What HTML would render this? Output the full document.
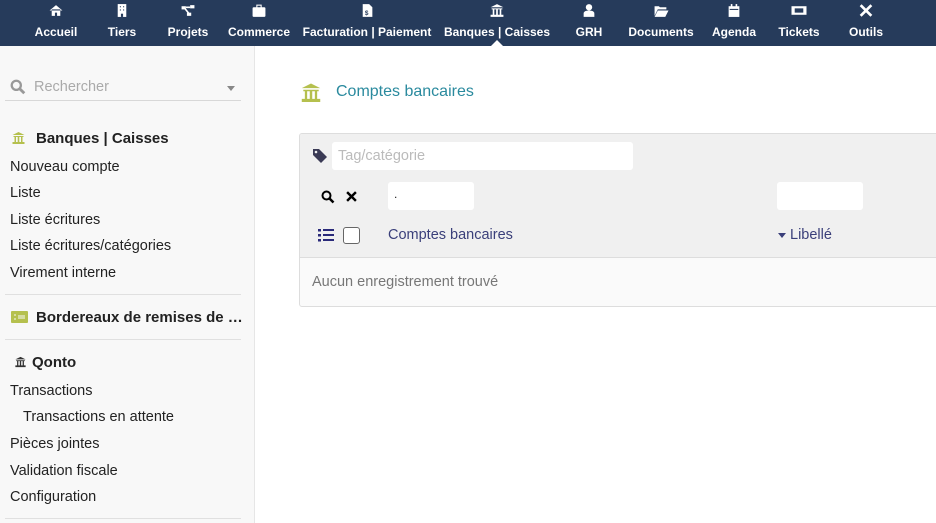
<!DOCTYPE html>
<html><head><meta charset="utf-8"><style>
*{margin:0;padding:0;box-sizing:border-box}
body{width:936px;height:523px;overflow:hidden;font-family:"Liberation Sans",Arial,sans-serif;background:#fff;position:relative}
#nav{position:absolute;left:0;top:0;width:936px;height:46px;background:#263b5b}
.ni{position:absolute;top:0;height:46px;color:#fff;font-size:12px;font-weight:bold;text-align:center;transform:translateX(-50%);white-space:nowrap}
.ni .ic{position:absolute;top:3px;left:50%;transform:translateX(-50%);width:15px;height:15px}
.ni span{position:absolute;top:25px;left:50%;transform:translateX(-50%)}
#side{position:absolute;left:0;top:46px;width:255px;height:477px;background:#f8f8f8;border-right:1px solid #e6e6e6}
.t{position:absolute;font-size:14.5px;color:#222;white-space:nowrap}
.b{font-weight:bold;font-size:15px}
.hr{position:absolute;left:5px;width:236px;height:1px;background:#e0e0e0}
</style></head><body>
<div id="nav">
<div class="ni" style="left:56px"><svg class="ic" viewBox="0 0 14 14"><path d="M1 7L7 2l6 5M3 6v6h3V9h2v3h3V6" fill="#fff"/></svg><span>Accueil</span></div>
<div class="ni" style="left:122px"><svg class="ic" viewBox="0 0 14 14"><rect x="3" y="1" width="8" height="12" fill="#fff"/><g fill="#263b5b"><rect x="5" y="3" width="1" height="1"/><rect x="8" y="3" width="1" height="1"/><rect x="5" y="6" width="1" height="1"/><rect x="8" y="6" width="1" height="1"/><rect x="6" y="10" width="2" height="3"/></g></svg><span>Tiers</span></div>
<div class="ni" style="left:188px"><svg class="ic" viewBox="0 0 14 14"><rect x="1" y="3" width="4" height="3" fill="#fff"/><rect x="9" y="2" width="4" height="3" fill="#fff"/><rect x="6" y="9" width="4" height="3" fill="#fff"/><path d="M4 5l4 5M5 4h4" stroke="#fff" stroke-width="1.5"/></svg><span>Projets</span></div>
<div class="ni" style="left:259px"><svg class="ic" viewBox="0 0 14 14"><rect x="1" y="4" width="12" height="9" rx="1" fill="#fff"/><rect x="5" y="2" width="4" height="3" fill="none" stroke="#fff"/></svg><span>Commerce</span></div>
<div class="ni" style="left:367px"><svg class="ic" viewBox="0 0 14 14"><path d="M3 1h6l3 3v9H3z" fill="#fff"/><text x="5" y="11" font-size="6" fill="#263b5b">$</text></svg><span>Facturation | Paiement</span></div>
<div class="ni" style="left:497px"><svg class="ic" viewBox="0 0 14 14"><path d="M1 4L7 1l6 3zM2 5h10v1H2zM3 6h1.5v5H3zM6.2 6h1.6v5H6.2zM9.5 6H11v5H9.5zM1 11h12v2H1z" fill="#fff"/></svg><span>Banques | Caisses</span><div style="position:absolute;left:50%;bottom:0;margin-left:-6px;border:6px solid transparent;border-bottom-color:#fff;border-top:0"></div></div>
<div class="ni" style="left:589px"><svg class="ic" viewBox="0 0 14 14"><circle cx="7" cy="4" r="3" fill="#fff"/><path d="M2 13v-3q0-3 5-3t5 3v3z" fill="#fff"/></svg><span>GRH</span></div>
<div class="ni" style="left:661px"><svg class="ic" viewBox="0 0 14 14"><path d="M1 3h4l1 1h6v2H4l-3 6zM4 7h10l-3 6H1z" fill="#fff"/></svg><span>Documents</span></div>
<div class="ni" style="left:734px"><svg class="ic" viewBox="0 0 14 14"><rect x="2" y="3" width="10" height="10" fill="#fff"/><rect x="4" y="1" width="1.5" height="3" fill="#fff"/><rect x="8.5" y="1" width="1.5" height="3" fill="#fff"/><path d="M3 6h8" stroke="#263b5b"/></svg><span>Agenda</span></div>
<div class="ni" style="left:799px"><svg class="ic" viewBox="0 0 14 14"><rect x="0" y="3" width="14" height="8" fill="#fff"/><rect x="3" y="5" width="8" height="4" fill="#263b5b"/></svg><span>Tickets</span></div>
<div class="ni" style="left:866px"><svg class="ic" viewBox="0 0 14 14"><path d="M2 2l10 10M12 2L2 12" stroke="#fff" stroke-width="2.5"/></svg><span>Outils</span></div>
</div>
<div id="side">
<svg style="position:absolute;left:10px;top:33px" width="16" height="16" viewBox="0 0 14 14"><circle cx="5.5" cy="5.5" r="4" fill="none" stroke="#999" stroke-width="2"/><path d="M8.5 8.5l4 4" stroke="#999" stroke-width="2.5"/></svg>
<div class="t" style="left:34px;top:33px;color:#aaa">Rechercher</div>
<div style="position:absolute;left:227px;top:40px;border:4px solid transparent;border-top:5px solid #888;border-bottom:0"></div>
<div class="hr" style="top:54px;background:#d8d8d8"></div>
<svg style="position:absolute;left:11px;top:85px" width="15" height="14" viewBox="0 0 14 14"><path d="M1 4L7 1l6 3zM2 5h10v1H2zM3 6h1.5v5H3zM6.2 6h1.6v5H6.2zM9.5 6H11v5H9.5zM1 11h12v2H1z" fill="#b5c04e"/></svg>
<div class="t b" style="left:36px;top:84px">Banques | Caisses</div>
<div class="t" style="left:10px;top:113px">Nouveau compte</div>
<div class="t" style="left:10px;top:139px">Liste</div>
<div class="t" style="left:10px;top:166px">Liste écritures</div>
<div class="t" style="left:10px;top:192px">Liste écritures/catégories</div>
<div class="t" style="left:10px;top:219px">Virement interne</div>
<div class="hr" style="top:248px"></div>
<svg style="position:absolute;left:11px;top:265px" width="17" height="12" viewBox="0 0 17 12"><rect width="17" height="12" rx="1" fill="#b5c04e"/><path d="M3 4h2M3 8h2M7 5h7M7 7h7" stroke="#f8f8f8" stroke-width="1"/></svg>
<div class="t b" style="left:36px;top:263px">Bordereaux de remises de …</div>
<div class="hr" style="top:293px"></div>
<svg style="position:absolute;left:14px;top:310px" width="13" height="12" viewBox="0 0 14 14"><path d="M1 4L7 1l6 3zM2 5h10v1H2zM3 6h1.5v5H3zM6.2 6h1.6v5H6.2zM9.5 6H11v5H9.5zM1 11h12v2H1z" fill="#333"/></svg>
<div class="t b" style="left:32px;top:308px">Qonto</div>
<div class="t" style="left:10px;top:337px">Transactions</div>
<div class="t" style="left:23px;top:363px">Transactions en attente</div>
<div class="t" style="left:10px;top:390px">Pièces jointes</div>
<div class="t" style="left:10px;top:417px">Validation fiscale</div>
<div class="t" style="left:10px;top:443px">Configuration</div>
<div class="hr" style="top:472px"></div>
</div>
<svg style="position:absolute;left:300px;top:82px" width="22" height="20" viewBox="0 0 14 13"><path d="M1 4L7 1l6 3zM2 5h10v1H2zM3 6h1.5v5H3zM6.2 6h1.6v5H6.2zM9.5 6H11v5H9.5zM1 11h12v2H1z" fill="#b5c04e"/></svg>
<div class="t" style="left:336px;top:83px;font-size:16px;color:#2a8a9e">Comptes bancaires</div>
<div style="position:absolute;left:299px;top:133px;width:650px;height:174px;border:1px solid #ddd;border-radius:3px;background:#fafafa;overflow:hidden">
<div style="position:absolute;left:0;top:0;width:100%;height:124px;background:#f0f0f0;border-bottom:1px solid #ddd"></div>
<svg style="position:absolute;left:12px;top:14px" width="16" height="16" viewBox="0 0 16 16"><path d="M1 1h6l8 8-6 6-8-8z" fill="#3a3a55"/><circle cx="4" cy="4" r="1.3" fill="#f0f0f0"/></svg>
<div style="position:absolute;left:32px;top:8px;width:301px;height:28px;background:#fff;border-radius:3px"></div>
<div class="t" style="left:38px;top:14px;color:#bbb">Tag/catégorie</div>
<svg style="position:absolute;left:21px;top:56px" width="14" height="14" viewBox="0 0 14 14"><circle cx="5.5" cy="5.5" r="4" fill="none" stroke="#000" stroke-width="2"/><path d="M8.5 8.5l4 4" stroke="#000" stroke-width="2.5"/></svg>
<svg style="position:absolute;left:46px;top:57px" width="11" height="11" viewBox="0 0 10 10"><path d="M1 1l8 8M9 1L1 9" stroke="#000" stroke-width="2.2"/></svg>
<div style="position:absolute;left:88px;top:48px;width:86px;height:28px;background:#fff;border-radius:3px"></div>
<div class="t" style="left:94px;top:53px;font-size:12px">.</div>
<div style="position:absolute;left:477px;top:48px;width:86px;height:28px;background:#fff;border-radius:3px"></div>
<svg style="position:absolute;left:18px;top:94px" width="16" height="14" viewBox="0 0 16 14"><g fill="#2a2a7a"><rect x="0" y="1" width="3" height="2.5"/><rect x="0" y="6" width="3" height="2.5"/><rect x="0" y="11" width="3" height="2.5"/><rect x="5" y="1" width="11" height="2"/><rect x="5" y="6" width="11" height="2"/><rect x="5" y="11" width="11" height="2"/></g></svg>
<div style="position:absolute;left:43px;top:93px;width:17px;height:17px;border:1.5px solid #666;border-radius:3px;background:#fff"></div>
<div class="t" style="left:88px;top:93px;color:#3a3f7a">Comptes bancaires</div>
<div style="position:absolute;left:478px;top:99px;border:4px solid transparent;border-top:5px solid #3a3f7a;border-bottom:0"></div>
<div class="t" style="left:490px;top:93px;color:#3a3f7a">Libellé</div>
<div class="t" style="left:12px;top:140px;color:#777">Aucun enregistrement trouvé</div>
</div>
</body></html>
